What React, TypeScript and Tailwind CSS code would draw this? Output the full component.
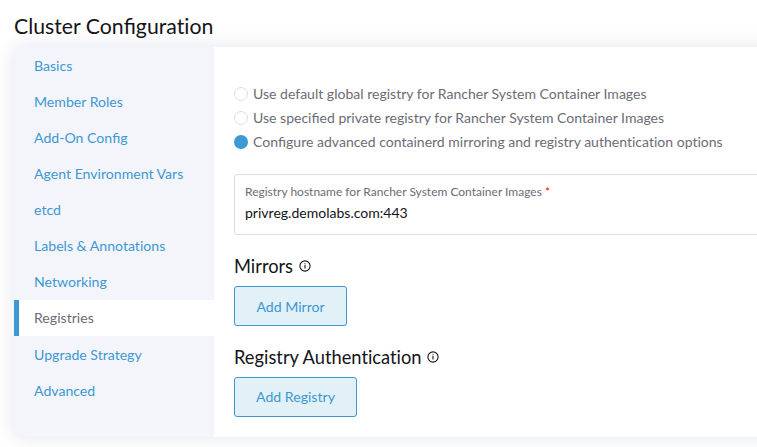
import React from "react";

const tabs = ["Basics", "Member Roles", "Add-On Config", "Agent Environment Vars", "etcd", "Labels & Annotations", "Networking", "Registries", "Upgrade Strategy", "Advanced"];
const options = [
  "Use default global registry for Rancher System Container Images",
  "Use specified private registry for Rancher System Container Images",
  "Configure advanced containerd mirroring and registry authentication options",
];

// Only the "fi" pair is set as a ligature; all other pairs stay separate.
function Label({ text }: { text: string }) {
  return (
    <span className="whitespace-pre">
      {text.split(/(fi)/).map((part, i) =>
        part === "fi" ? <span key={i} className="[font-variant-ligatures:common-ligatures]">fi</span> : part,
      )}
    </span>
  );
}

function Info() {
  return (
    <svg width="12" height="12" viewBox="0 0 12 12" fill="none" stroke="#141419" strokeWidth="1.1">
      <circle cx="6" cy="6" r="5.1" />
      <path d="M6 5V8.6M6 3.2v1.1" />
    </svg>
  );
}

function Section({ title, action, heading, button }: { title: string; action: string; heading: string; button: string }) {
  return (
    <section>
      <h2 className={`flex h-[22px] items-center text-[18.3px] leading-[22px] text-[#141419] ${heading}`}><Label text={title} /><Info /></h2>
      <button className={`mt-[9px] flex h-10 items-center justify-center rounded-[3px] border border-[#3d98d3] bg-[#e2f0f8] text-[14.1px] text-[#3d98d3] ${button}`}><Label text={action} /></button>
    </section>
  );
}

export default function App() {
  return (
    <div className="h-[447px] w-[757px] overflow-hidden bg-white pl-[14px] font-['Lato',sans-serif] text-[14.04px] text-[#6c6c76] [font-variant-ligatures:no-common-ligatures]">
      <h1 className="h-[47px] pt-[13px] text-[21.25px] leading-[27px] text-[#141419]"><Label text="Cluster Configuration" /></h1>
      <div className="flex h-[390px] w-[800px] rounded-[4px] shadow-[0_0_20px_#e4e5eb]">
        <nav className="w-[200px] shrink-0 rounded-l-[4px] bg-[#f4f5fa] pt-px text-[14.1px]">
          {tabs.map((t) => (
            <div key={t} className={t === "Registries" ? "mb-px flex h-9 items-center border-l-[5px] border-[#3d98d3] bg-white pl-[15px]" : "flex h-9 items-center pl-5 text-[#3d98d3]"}><Label text={t} /></div>
          ))}
        </nav>
        <main className="flex-1 bg-white pl-5 pt-[35px]">
          {options.map((o, i) => (
            <label key={o} className="flex h-6 items-center gap-[5px]">
              <span className={i === 2 ? "size-[14px] rounded-full bg-[#3d98d3]" : "size-[14px] rounded-full border border-[#dcdee7]"} />
              <Label text={o} />
            </label>
          ))}
          <div className="mb-5 mt-5 h-[61px] rounded-[3px] border border-[#dcdee7] pl-[10px] pt-[8px]">
            <div className="text-[12px] leading-[18px]"><Label text="Registry hostname for Rancher System Container Images " /><span className="text-[#f00]">*</span></div>
            <div className="mt-[2px] leading-[20px] text-[#141419]">privreg.demolabs.com:443</div>
          </div>
          <Section title="Mirrors" action="Add Mirror" heading="gap-[6px]" button="w-[113px] pt-[2px]" />
          <div className="h-5" />
          <Section title="Registry Authentication" action="Add Registry" heading="gap-[5px]" button="w-[123px]" />
        </main>
      </div>
    </div>
  );
}
